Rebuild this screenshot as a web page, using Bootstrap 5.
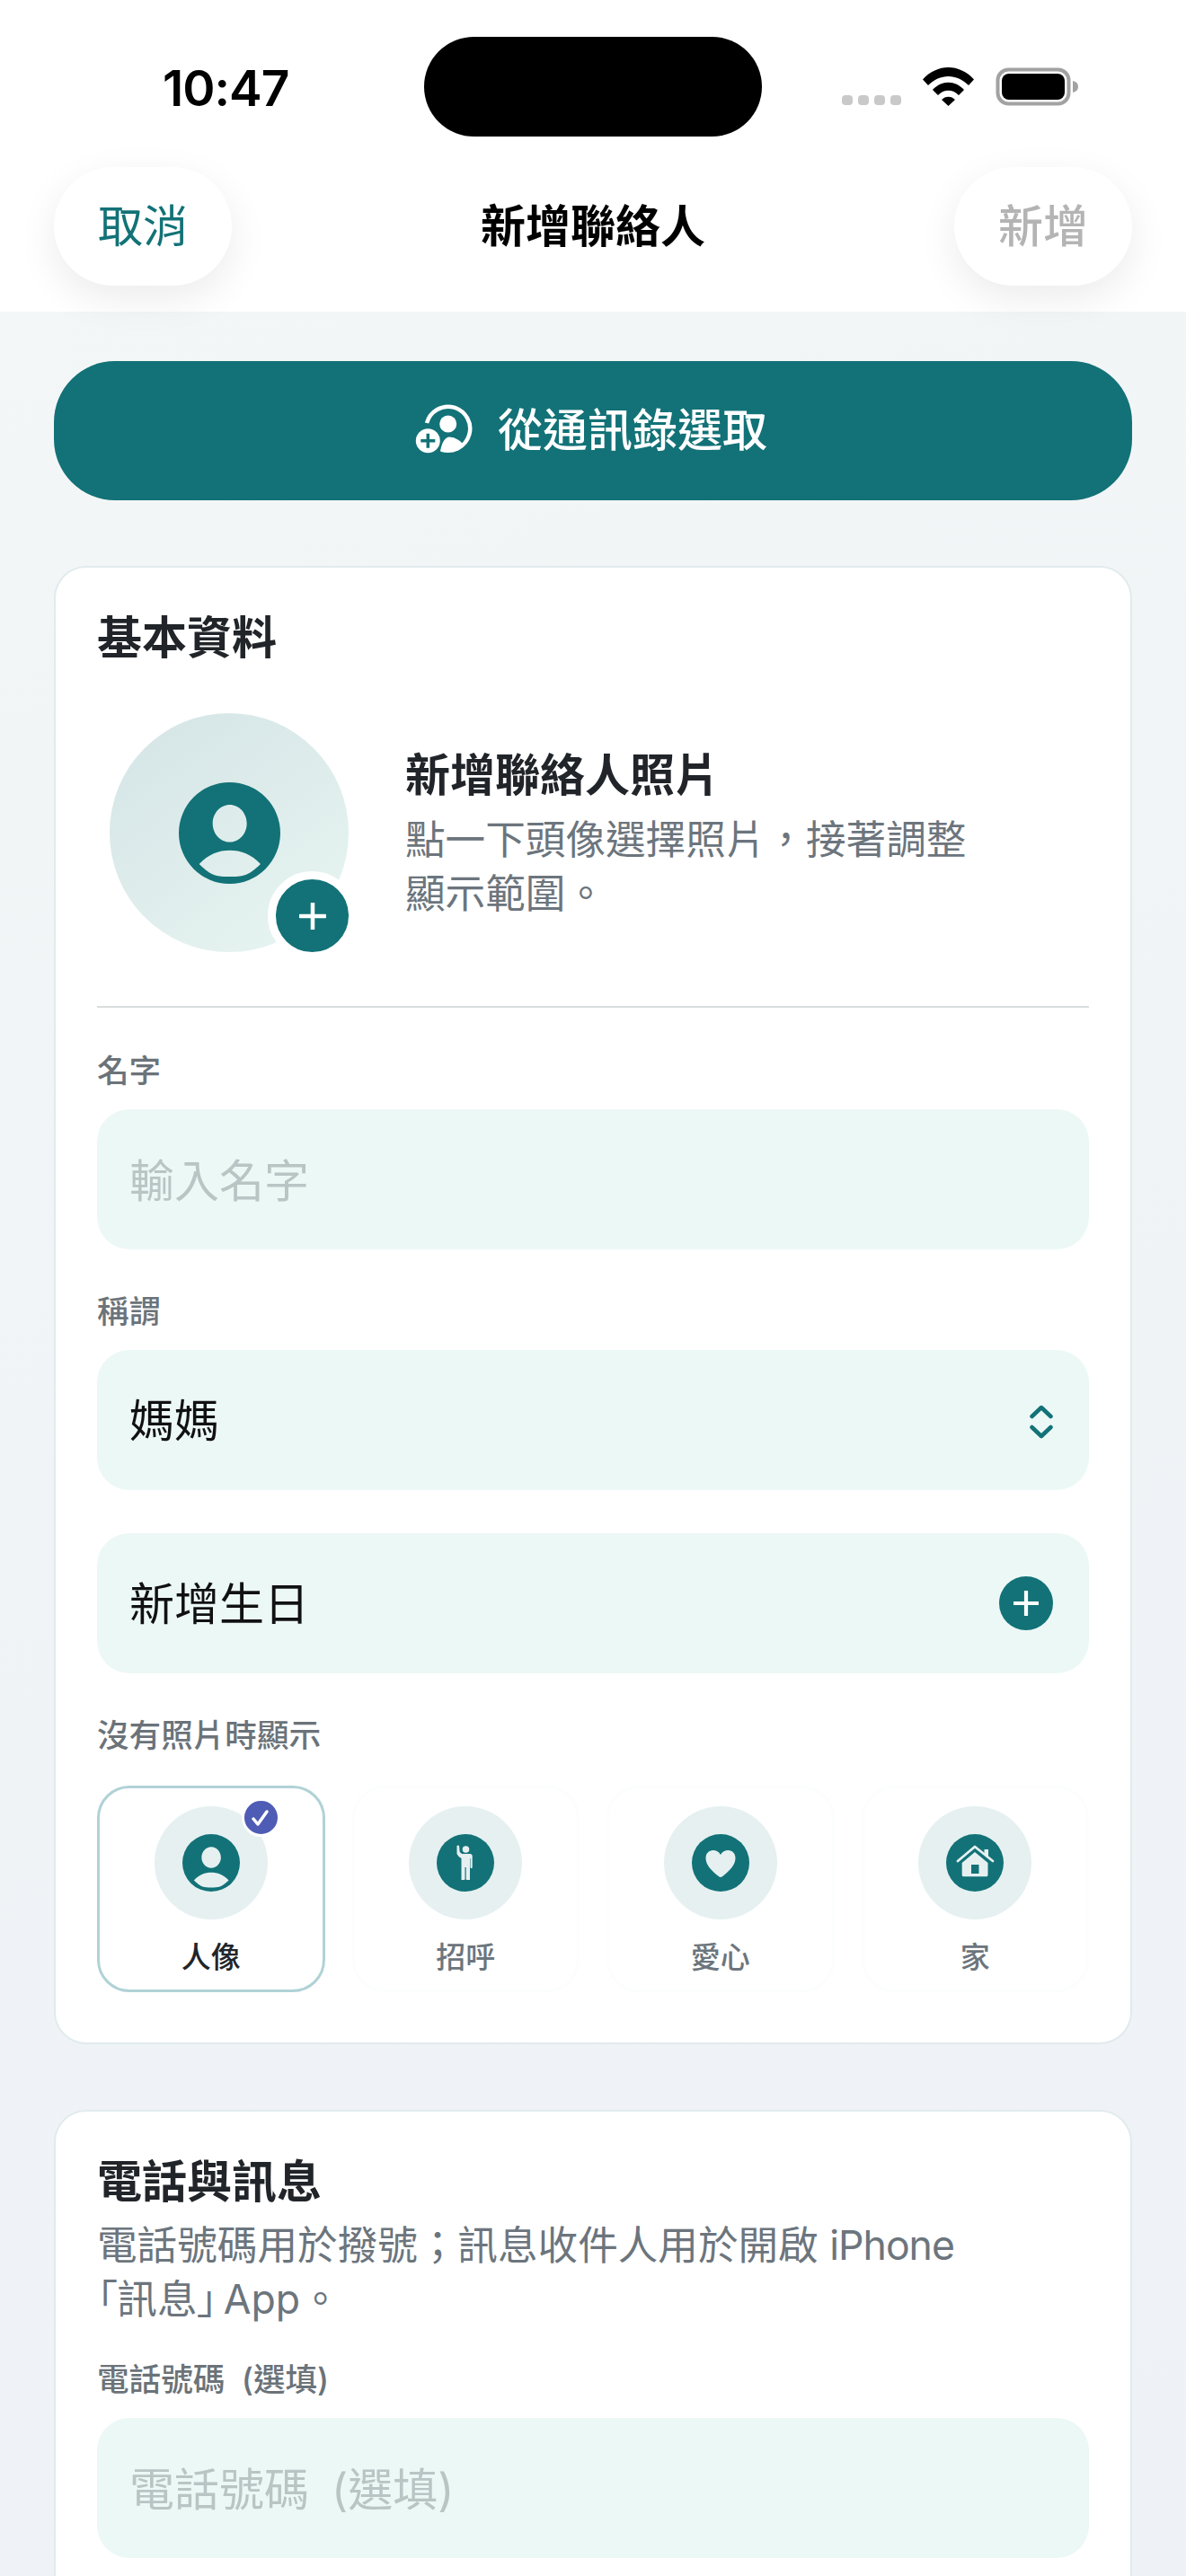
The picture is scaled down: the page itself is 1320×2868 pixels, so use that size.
<!DOCTYPE html>
<html lang="zh-Hant">
<head>
    <meta charset="utf-8">
    <title>新增聯絡人</title>
    <link href="https://cdn.jsdelivr.net/npm/bootstrap@5.3.0/dist/css/bootstrap.min.css" rel="stylesheet">
    <style>
        :root { --teal: #127277; --field: #ecf8f6; --muted: #6c757d; }
        html, body { margin: 0; height: 2868px; overflow: hidden; }
        body { font-family: Inter, "Noto Sans CJK TC", sans-serif; font-size: 50px; color: #212529; background: #f1f4f6; }
        .screen { height: 2868px; overflow: hidden; background: linear-gradient(160deg, #f4f7f7, #eef1f6); }

        /* header */
        .top-head { position: relative; z-index: 1; background: #fff; height: 347px; padding-top: 41px; }
        .status-row { height: 111px; }
        .status-left { width: 472px; padding-left: 181px; padding-top: 30px; font-size: 55px; line-height: 1; font-weight: 600; color: #000; letter-spacing: -1px; }
        .island { width: 376px; height: 111px; border-radius: 56px; background: #000; }
        .status-right { padding-left: 89px; padding-top: 34px; }
        .sig-dots { gap: 6px; margin-top: 31px; }
        .sig-dots i { display: block; width: 12px; height: 11px; border-radius: 4px; background: #c9c9c9; }
        .nav-row { padding: 0 60px; margin-top: 34px; }
        .pill-btn { width: 198px; height: 132px; border: 0; border-radius: 66px; background: #fff; font-size: 50px; line-height: 1; padding: 0; box-shadow: 0 14px 44px rgba(0, 0, 0, .08); }
        .pill-btn.cancel { color: var(--teal); }
        .pill-btn.add { color: #b4b4b4; font-weight: 500; }
        .head-title { font-size: 50px; font-weight: 600; color: #000; line-height: 1; }

        /* import button */
        .main-area { padding: 55px 60px 0; }
        .import-btn { height: 155px; width: 100%; border: 0; border-radius: 68px; background: var(--teal); color: #fff; font-size: 50px; font-weight: 500; gap: 28px; padding: 0 4px 0 0; }
        .import-btn:hover { background: var(--teal); color: #fff; }

        /* cards */
        .form-card { border: 2px solid #e1ebed; border-radius: 36px; background: #fff; padding: 48px 46px 56px; margin-top: 73px; }
        .card-head { font-size: 50px; line-height: 61px; font-weight: 600; margin: 0; }
        .avatar-row { margin-top: 53px; padding-left: 14px; gap: 63px; }
        .avatar-pick { position: relative; width: 266px; height: 266px; flex: none; border-radius: 50%; background: linear-gradient(145deg, #d4e4e5, #e8f5f2); }
        .avatar-plus { position: absolute; right: -9px; bottom: -9px; width: 99px; height: 99px; border-radius: 50%; background: var(--teal); border: 9px solid #fff; }
        .avatar-copy { padding-top: 4px; }
        .avatar-title { font-size: 50px; line-height: 61px; font-weight: 600; margin-bottom: 11px; }
        .desc-txt { font-size: 44.6px; line-height: 60px; color: var(--muted); }
        .quote-tight { font-feature-settings: "palt"; margin-right: 7px; }
        .latin-tight { letter-spacing: -1px; }
        .soft-line { margin: 60px 0 47px; border: 0; border-top: 2px solid #d9dddd; opacity: 1; }
        .field-label { display: block; font-size: 35.6px; line-height: 44px; padding-top: 2px; font-weight: 500; color: #6b7379; margin-bottom: 20px; word-spacing: 9px; }
        .field-input, .field-input:focus { height: 156px; border: 0; border-radius: 36px; background: var(--field); padding: 3px 36px 0; font-size: 50px; color: #000; box-shadow: none; }
        .field-input::placeholder { color: #b8c5c4; opacity: 1; word-spacing: 11px; }
        .field-row { height: 156px; border-radius: 36px; background: var(--field); padding: 3px 40px 0 36px; font-size: 50px; color: #111; }
        .gap-after { margin-bottom: 46px; }
        .tile-row { display: grid; grid-template-columns: repeat(4, 1fr); gap: 30px; margin-top: 33px; }
        .tile { position: relative; height: 230px; border: 3px solid #fcfdfd; border-radius: 36px; padding-top: 20px; font-size: 33px; line-height: 44px; font-weight: 500; color: var(--muted); }
        .tile.is-on { border-color: #b0d2d7; color: #212529; }
        .tile-disc { width: 126px; height: 126px; border-radius: 50%; background: #e6f0f1; margin-bottom: 20px; }
        .tile-check { position: absolute; top: 11px; right: 47px; width: 43px; height: 43px; border-radius: 50%; background: #4f5cb5; border: 3px solid #fff; }
    </style>
</head>
<body>
    <svg width="0" height="0" class="position-absolute">
        <symbol id="ico-person" viewBox="0 0 113 113">
            <path fill="#127277" fill-rule="evenodd" d="M56.5 0a56.5 56.5 0 1 0 0 113a56.5 56.5 0 1 0 0-113ZM56.7 25c-10.500 0-19 9.300-19 20.800s8.500 20.800 19 20.800s19-9.300 19-20.800s-8.500-20.800-19-20.800ZM22.700 91c14 14 20 14 34 14s20 0 34.300-14c-10-11-22-15.300-34.300-15.300S32.700 80 22.700 91Z"/>
        </symbol>
        <symbol id="ico-plus" viewBox="0 0 30 30">
            <path stroke="currentColor" stroke-width="4.500" stroke-linecap="round" d="M15 1v28M1 15h28" fill="none"/>
        </symbol>
    </svg>

    <div class="screen">
        <header class="top-head">
            <div class="status-row d-flex">
                <div class="status-left">10:47</div>
                <div class="island"></div>
                <div class="status-right d-flex align-items-start">
                    <div class="sig-dots d-flex"><i></i><i></i><i></i><i></i></div>
                    <svg class="ms-4" width="57" height="43" viewBox="0 0 57 43">
                        <path d="M0 13.500C16-4.500 41-4.500 57 13.500L51 20C38 6.500 19 6.500 6 20Z"/>
                        <path d="M11 25C21 14 36 14 46 25L40 31C33.500 24 23.500 24 17 31Z"/>
                        <path d="M21 36C25 31.500 32 31.500 36 36L28.500 43Z"/>
                    </svg>
                    <svg class="ms-4" width="93" height="43" viewBox="0 0 93 43">
                        <rect x="2.500" y="2.500" width="79" height="38" rx="12" fill="#fff" stroke="#a2a2a2" stroke-width="4"/>
                        <rect x="7" y="7" width="70" height="29" rx="8"/>
                        <path d="M86 15c4 1 6 3 6 6.500s-2 5.500-6 6.500Z" fill="#a2a2a2"/>
                    </svg>
                </div>
            </div>
            <div class="nav-row d-flex justify-content-between align-items-center">
                <button class="btn pill-btn cancel" type="button">取消</button>
                <div class="head-title">新增聯絡人</div>
                <button class="btn pill-btn add" type="button">新增</button>
            </div>
        </header>

        <main class="main-area">
            <button class="btn import-btn d-flex align-items-center justify-content-center" type="button">
                <svg width="64" height="62" viewBox="40 30 64 62">
                    <path d="M53 52A24.500 24.500 0 1 1 69 81.500" fill="none" stroke="#fff" stroke-width="4.500"/>
                    <circle cx="76.700" cy="53" r="9.500" fill="#fff"/>
                    <path d="M68 83Q71 68 78 67.500Q86 67.500 93 75A25 25 0 0 1 68 83Z" fill="#fff"/>
                    <circle cx="54.300" cy="71.700" r="13.500" fill="#fff"/>
                    <path d="M54.300 63.700v16M46.300 71.700h16" stroke="#127277" stroke-width="3.500" fill="none"/>
                </svg>
                <span>從通訊錄選取</span>
            </button>

            <section class="form-card">
                <h2 class="card-head">基本資料</h2>
                <div class="avatar-row d-flex align-items-center">
                    <div class="avatar-pick d-flex align-items-center justify-content-center">
                        <svg width="113" height="113"><use href="#ico-person"/></svg>
                        <span class="avatar-plus d-flex align-items-center justify-content-center text-white">
                            <svg width="30" height="30"><use href="#ico-plus"/></svg>
                        </span>
                    </div>
                    <div class="avatar-copy">
                        <div class="avatar-title">新增聯絡人照片</div>
                        <div class="desc-txt">點一下頭像選擇照片，接著調整<br>顯示範圍。</div>
                    </div>
                </div>
                <hr class="soft-line">

                <label class="field-label" for="nameInput">名字</label>
                <input id="nameInput" class="form-control field-input gap-after" type="text" placeholder="輸入名字">

                <label class="field-label">稱謂</label>
                <div class="field-row d-flex align-items-center justify-content-between" style="margin-bottom:48px">
                    <span>媽媽</span>
                    <svg width="26" height="38" viewBox="0 0 26 38" fill="none" stroke="#127277" stroke-width="4.500" stroke-linecap="round" stroke-linejoin="round"><path d="M2.500 13L13 3l10.500 10M2.500 25L13 35l10.500-10"/></svg>
                </div>

                <div class="field-row d-flex align-items-center justify-content-between gap-after">
                    <span>新增生日</span>
                    <span class="d-flex align-items-center justify-content-center rounded-circle text-white" style="width:60px;height:60px;background:#127277;margin-top:-3px">
                        <svg width="28" height="28"><use href="#ico-plus"/></svg>
                    </span>
                </div>

                <div class="field-label mb-0">沒有照片時顯示</div>
                <div class="tile-row">
                    <div class="tile is-on d-flex flex-column align-items-center">
                        <div class="tile-disc d-flex align-items-center justify-content-center">
                            <svg width="64" height="64"><use href="#ico-person"/></svg>
                        </div>
                        <div>人像</div>
                        <span class="tile-check d-flex align-items-center justify-content-center">
                            <svg width="22" height="20" viewBox="0 0 22 20" fill="none" stroke="#fff" stroke-width="3.500" stroke-linecap="round" stroke-linejoin="round"><path d="M3 11l5 6L18 3"/></svg>
                        </span>
                    </div>
                    <div class="tile d-flex flex-column align-items-center">
                        <div class="tile-disc d-flex align-items-center justify-content-center">
                            <svg width="64" height="64" viewBox="0 0 64 64">
                                <circle cx="32" cy="32" r="32" fill="#127277"/>
                                <g fill="#e6f0f1">
                                    <circle cx="32.500" cy="17" r="3.800"/>
                                    <path d="M22.500 13c.8-.8 2-.8 2.500 0l.7 7 2.500 2h9c1.500 0 2.500 1 2.500 2.500V37c0 1.500-2.200 1.500-2.200 0V27h-.5v24h-3.300c-.7 0-1-.5-1-1V37h-1.200v13c0 .7-.4 1-1 1H27.500V27l-3-2-2-3Z"/>
                                </g>
                            </svg>
                        </div>
                        <div>招呼</div>
                    </div>
                    <div class="tile d-flex flex-column align-items-center">
                        <div class="tile-disc d-flex align-items-center justify-content-center">
                            <svg width="64" height="64" viewBox="0 0 64 64">
                                <circle cx="32" cy="32" r="32" fill="#127277"/>
                                <path fill="#e6f0f1" d="M32 48c-1 0-2-.8-3.500-2C22 40.500 15.500 34.500 15.500 26.500c0-5 3.600-8.500 8-8.500c3.600 0 6.700 1.800 8.500 5c1.800-3.200 4.900-5 8.500-5c4.400 0 8 3.500 8 8.500c0 8-6.500 14-13 19.500c-1.500 1.200-2.500 2-3.500 2Z"/>
                            </svg>
                        </div>
                        <div>愛心</div>
                    </div>
                    <div class="tile d-flex flex-column align-items-center">
                        <div class="tile-disc d-flex align-items-center justify-content-center">
                            <svg width="64" height="64" viewBox="0 0 64 64">
                                <circle cx="32" cy="32" r="32" fill="#127277"/>
                                <path fill="none" stroke="#e6f0f1" stroke-width="2.800" stroke-linecap="round" stroke-linejoin="round" d="M13 30L32 14l20 16"/>
                                <path fill="#e6f0f1" fill-rule="evenodd" d="M42.500 17h4.500v10l-4.500-3.500ZM32 20l14.500 12v13.500c0 1-.8 1.800-1.800 1.800H19.500c-1 0-1.800-.8-1.800-1.800V32ZM28 34v10h8.500V34Z"/>
                            </svg>
                        </div>
                        <div>家</div>
                    </div>
                </div>
            </section>

            <section class="form-card" style="height:700px">
                <h2 class="card-head">電話與訊息</h2>
                <div class="desc-txt" style="margin-top:10px;margin-bottom:36px">電話號碼用於撥號；訊息收件人用於開啟 <span class="latin-tight">iPhone</span><br><span class="quote-tight">「訊息」</span>App。</div>
                <label class="field-label" for="phoneInput">電話號碼 (選填)</label>
                <input id="phoneInput" class="form-control field-input" type="text" placeholder="電話號碼 (選填)">
            </section>
        </main>
    </div>

    <script src="https://cdn.jsdelivr.net/npm/bootstrap@5.3.0/dist/js/bootstrap.bundle.min.js"></script>
</body>
</html>
